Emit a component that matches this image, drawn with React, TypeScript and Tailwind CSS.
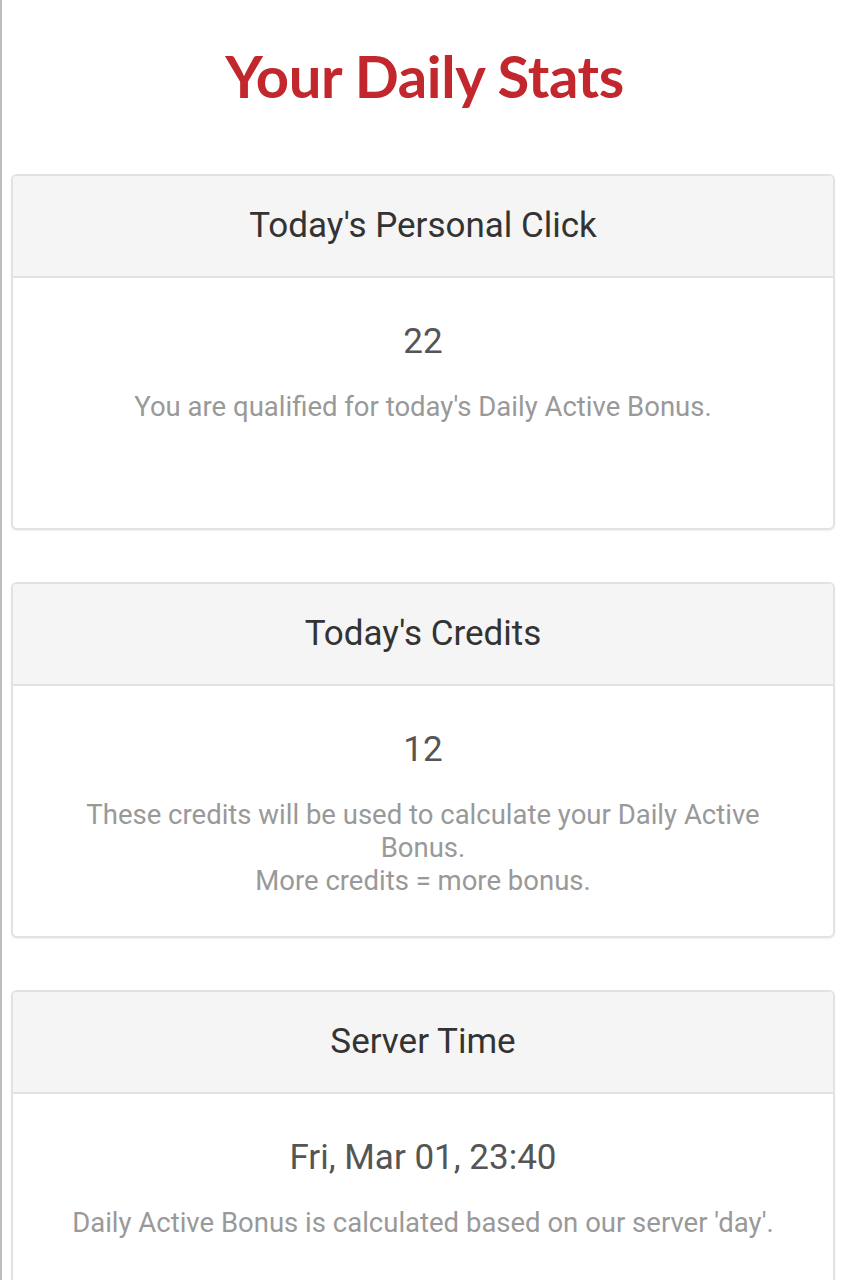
import React from "react";

type Stat = { title: string; value: string; lines: string[] };

const stats: Stat[] = [
  { title: "Today's Personal Click", value: "22", lines: ["You are qualified for today's Daily Active Bonus."] },
  {
    title: "Today's Credits",
    value: "12",
    lines: ["These credits will be used to calculate your Daily Active Bonus.", "More credits = more bonus."],
  },
  { title: "Server Time", value: "Fri, Mar 01, 23:40", lines: ["Daily Active Bonus is calculated based on our server 'day'."] },
];

function StatCard({ stat }: { stat: Stat }) {
  return (
    <div className="rounded-[6px] border-2 border-[#e2e2e2] bg-white overflow-hidden shadow-[0_1px_2px_rgba(0,0,0,0.06)]">
      <div className="h-[102px] bg-[#f5f5f5] border-b-2 border-[#e2e2e2] flex items-center justify-center">
        <h2 className="text-[35px] text-[#333]">{stat.title}</h2>
      </div>
      <div className="min-h-[250px] px-10 pt-[42px] pb-[38px] text-center">
        <div className="text-[35px] leading-[44px] text-[#555]">{stat.value}</div>
        <div className="mt-[26px] text-[27.5px] leading-[33px] text-[#999]">
          {stat.lines.map((l, i) => (
            <p key={i}>{l}</p>
          ))}
        </div>
      </div>
    </div>
  );
}

export default function App() {
  return (
    <div className="min-h-screen bg-white border-l-2 border-[#bdbdbd] font-['Roboto',sans-serif]">
      {/* page title, nudged left to sit over the card column */}
      <div className="pt-[36px] pb-[58px] pr-[8px] text-center">
        <h1 className="font-['Lato',sans-serif] font-bold text-[58px] leading-[80px] tracking-[-0.4px] text-[#c1272d]">
          Your Daily Stats
        </h1>
      </div>
      <div className="pl-[9px] pr-[20px] flex flex-col gap-[52px]">
        {stats.map((s) => (
          <StatCard key={s.title} stat={s} />
        ))}
      </div>
    </div>
  );
}
